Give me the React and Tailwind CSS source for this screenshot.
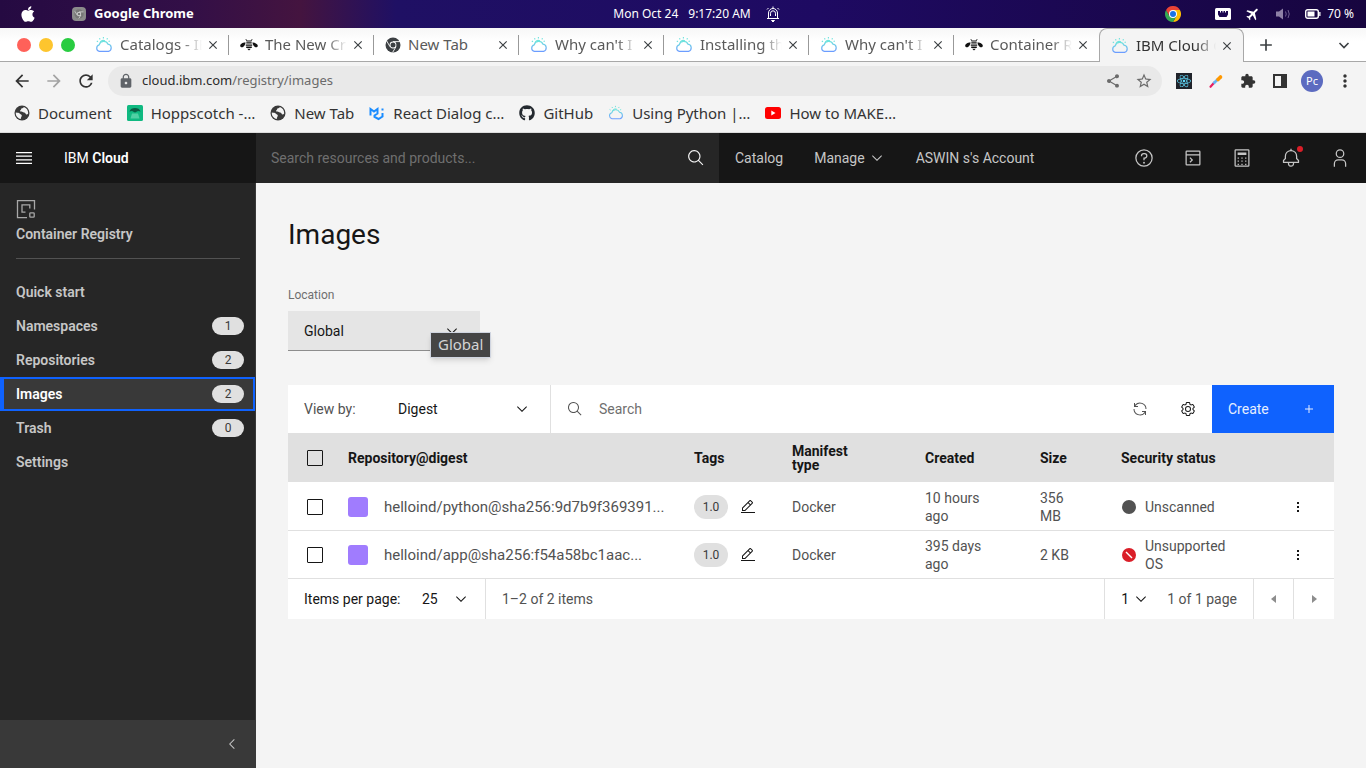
import React from "react";
import {
  FaApple,
  FaGithub,
  FaReact,
} from "react-icons/fa";
import {
  MdArrowBack,
  MdArrowForward,
  MdRefresh,
  MdLock,
  MdShare,
  MdStarBorder,
  MdExtension,
  MdMoreVert,
  MdClose,
  MdAdd,
  MdFlight,
} from "react-icons/md";

const P = {
  chevronDown: "M16 22L6 12 7.4 10.6 16 19.2 24.6 10.6 26 12z",
  chevronLeft: "M10 16L20 6 21.4 7.4 12.8 16 21.4 24.6 20 26z",
  caretLeft: "M20 24L10 16 20 8z",
  caretRight: "M12 8L22 16 12 24z",
  search:
    "M29,27.5859l-7.5521-7.5521a11.0177,11.0177,0,1,0-1.4141,1.4141L27.5859,29ZM4,13a9,9,0,1,1,9,9A9.01,9.01,0,0,1,4,13Z",
  edit: "M2 26H30V28H2zM25.4 9c.8-.8.8-2 0-2.8l-3.6-3.6c-.8-.8-2-.8-2.8 0l-15 15V24h6.4L25.4 9zM20.4 4L24 7.6l-3 3L17.4 7 20.4 4zM6 22v-3.6l10-10 3.6 3.6-10 10H6z",
  renew:
    "M12 10H6.78A11 11 0 0127 16h2A13 13 0 006 7.68V4H4v8h8zM20 22h5.22A11 11 0 015 16H3a13 13 0 0023 8.32V28h2V20H20z",
  settings:
    "M27 16.76c0-.25 0-.5 0-.76s0-.51 0-.77l1.92-1.68A2 2 0 0029.3 11L26.94 7a2 2 0 00-1.73-1 2 2 0 00-.64.1l-2.43.82a11.35 11.35 0 00-1.31-.75l-.51-2.52a2 2 0 00-2-1.61H13.64a2 2 0 00-2 1.61l-.51 2.52a11.48 11.48 0 00-1.32.75L7.43 6.06A2 2 0 006.79 6 2 2 0 005.06 7L2.7 11a2 2 0 00.41 2.51L5 15.24c0 .25 0 .5 0 .76s0 .51 0 .77L3.11 18.45A2 2 0 002.7 21L5.06 25a2 2 0 001.73 1 2 2 0 00.64-.1l2.43-.82a11.35 11.35 0 001.31.75l.51 2.52a2 2 0 002 1.61h4.72a2 2 0 002-1.61l.51-2.52a11.48 11.48 0 001.32-.75l2.42.82a2 2 0 00.64.1 2 2 0 001.73-1L29.3 21a2 2 0 00-.41-2.51ZM25.21 24l-3.43-1.16a8.86 8.86 0 01-2.71 1.57L18.36 28H13.64l-.71-3.55a9.36 9.36 0 01-2.7-1.57L6.79 24 4.43 20l2.72-2.4a8.9 8.9 0 010-3.13L4.43 12 6.79 8l3.43 1.16a8.86 8.86 0 012.71-1.57L13.64 4h4.72l.71 3.55a9.36 9.36 0 012.7 1.57L25.21 8 27.57 12l-2.72 2.4a8.9 8.9 0 010 3.13L27.57 20ZM16 22a6 6 0 116-6A5.94 5.94 0 0116 22Zm0-10a3.91 3.91 0 00-4 4 3.91 3.91 0 004 4 3.91 3.91 0 004-4A3.91 3.91 0 0016 12Z",
  add: "M17 15L17 8 15 8 15 15 8 15 8 17 15 17 15 24 17 24 17 17 24 17 24 15z",
  overflow: "M14 6h4v4h-4zM14 14h4v4h-4zM14 22h4v4h-4z",
  bell: "M28.7071,19.293,26,16.5859V13a10.0136,10.0136,0,0,0-9-9.9492V1H15V3.0508A10.0136,10.0136,0,0,0,6,13v3.5859L3.2929,19.293A1,1,0,0,0,3,20v3a1,1,0,0,0,1,1h7v.7768a5.152,5.152,0,0,0,4.5,5.1987A5.0057,5.0057,0,0,0,21,25V24h7a1,1,0,0,0,1-1V20A1,1,0,0,0,28.7071,19.293ZM19,25a3,3,0,0,1-6,0V24h6Zm8-3H5V20.4141L7.707,17.707A1,1,0,0,0,8,17V13a8,8,0,0,1,16,0v4a1,1,0,0,0,.293.707L27,20.4141Z",
  user: "M16 4a5 5 0 11-5 5 5 5 0 015-5m0-2a7 7 0 107 7A7 7 0 0016 2zM26 30H24V25a5 5 0 00-5-5H13a5 5 0 00-5 5v5H6V25a7 7 0 017-7h6a7 7 0 017 7z",
  help: "M16 2A14 14 0 1030 16 14 14 0 0016 2zm0 26A12 12 0 1128 16 12 12 0 0116 28zM16 22a1.5 1.5 0 100 3 1.5 1.5 0 000-3zM17 8H15.5A4.49 4.49 0 0011 12.5V13h2v-.5A2.5 2.5 0 0115.5 10H17a2.5 2.5 0 010 5H15v4.5h2V17a4.5 4.5 0 000-9z",
  terminal:
    "M26 4H6a2 2 0 00-2 2v20a2 2 0 002 2h20a2 2 0 002-2V6a2 2 0 00-2-2zm0 2v4H6V6zM6 26V12h20v14zM11.8 23.400l-1.400-1.400 3-3-3-3 1.400-1.400 4.400 4.400z",
  calculator:
    "M26 4v24H6V4h20m0-2H6a2 2 0 00-2 2v24a2 2 0 002 2h20a2 2 0 002-2V4a2 2 0 00-2-2zM9 7v4h14V7zM9 15h2v2H9zM15 15h2v2h-2zM21 15h2v2h-2zM9 20h2v2H9zM15 20h2v2h-2zM21 20h2v2h-2zM9 25h2v2H9zM15 25h2v2h-2zM21 25h2v2h-2z",
};

function Icon({ d, className }) {
  return (
    <svg viewBox="0 0 32 32" fill="currentColor" aria-hidden="true" className={className}>
      <path d={d} />
    </svg>
  );
}

function CloudIcon({ className = "h-[18px] w-[18px] shrink-0" }) {
  return (
    <svg viewBox="0 0 18 18" fill="none" aria-hidden="true" className={className}>
      <defs>
        <linearGradient id="sky" x1="0" y1="0" x2="0" y2="1">
          <stop offset="0" stopColor="#6fe3dd" />
          <stop offset="1" stopColor="#6c9dff" />
        </linearGradient>
      </defs>
      <path
        d="M4.400 15.400a3.400 3.400 0 01-.2-6.600A4.700 4.700 0 0113 8.200a3.700 3.700 0 01.6 7.200z"
        stroke="url(#sky)"
        strokeWidth="1.2"
      />
      <path
        d="M5 6.600A3.600 3.600 0 0110 4.800M8.400 1v1.400M4.400 2.200l.8 1.200M12.600 2.200l-.8 1.200M1.800 5l1.200.8M14.800 5l-1.200.6"
        stroke="#6fe3dd"
        strokeWidth="1.1"
      />
    </svg>
  );
}

function BeeIcon() {
  return (
    <svg viewBox="0 0 18 18" fill="#111" aria-hidden="true" className="h-[18px] w-[18px] shrink-0">
      <path d="M6.400 4.600l-1-1.200.6-.4 1.300 1.400h3.400L12 3l.6.400-1 1.200v.8H6.400z" />
      <path d="M6.300 6.200h5.400v1.400H6.300zM5.800 8.400h6.400v1.400H5.800zM6.200 10.600h5.600V12H6.200zM7.200 12.800h3.600L9 14.400z" />
      <path d="M5.600 6.600C3 6.400 .2 8 .2 9.800c0 1.400 1.800 1.800 2.800 1.300 1.400-.6 2.200-2.400 2.600-4.500zM12.400 6.600c2.600-.2 5.400 1.400 5.400 3.200 0 1.400-1.800 1.800-2.800 1.300-1.400-.6-2.200-2.400-2.600-4.500z" />
    </svg>
  );
}

function ChromeMono({ className = "h-4 w-4 shrink-0", color = "#3c4043" }) {
  return (
    <svg viewBox="0 0 16 16" aria-hidden="true" className={className}>
      <circle cx="8" cy="8" r="7.500" fill={color} />
      <path d="M8 4.600h7M5 9.700L1.600 3.800M11 9.700L7.600 15.400" stroke="#fff" strokeWidth=".9" />
      <circle cx="8" cy="8" r="3.400" fill="#fff" />
      <circle cx="8" cy="8" r="2.500" fill={color} />
    </svg>
  );
}

function GlobeIcon() {
  return (
    <svg viewBox="0 0 16 16" aria-hidden="true" className="h-4 w-4">
      <circle cx="8" cy="8" r="7.500" fill="#3a3a3a" />
      <path d="M1.800 7.500c2 .2 3.500.3 4.200 1.300.6 1 1.800.6 1.800 1.800 0 1.200-1 1.500-1 3.300C3.800 13.500 1.500 11 1.800 7.500z" fill="#f4f4f4" />
      <path d="M9.800 1.900C9.500 3 8.500 3 7.800 3.300c-1 .6-.4 1.300-1.400 1.900-.8.500-.2 1.500.8 1.400 1.400-.2 1.600.9 2.800 1 1.500.1 1.400 1.600 2.300 1.800.8.200 1.400-.4 1.900-1C14.300 5.200 12.500 2.700 9.800 1.900z" fill="#f4f4f4" />
    </svg>
  );
}

function ChromeColor() {
  return (
    <svg viewBox="0 0 48 48" aria-hidden="true" className="h-4 w-4">
      <path d="M24 12h20.800A24 24 0 0124 48L34.400 30z" fill="#fbbc04" />
      <path d="M3.200 12L13.600 30 34.400 30 24 48A24 24 0 013.200 12z" fill="#34a853" />
      <path d="M3.200 12A24 24 0 0144.800 12H24L13.600 30z" fill="#ea4335" />
      <circle cx="24" cy="24" r="12" fill="#fff" />
      <circle cx="24" cy="24" r="9" fill="#1a73e8" />
    </svg>
  );
}

const favicons = { cloud: CloudIcon, bee: BeeIcon, chrome: ChromeMono };

const tabs = [
  { icon: "cloud", title: "Catalogs - IB" },
  { icon: "bee", title: "The New Cr" },
  { icon: "chrome", title: "New Tab", short: true },
  { icon: "cloud", title: "Why can't I l" },
  { icon: "cloud", title: "Installing th" },
  { icon: "cloud", title: "Why can't I p" },
  { icon: "bee", title: "Container R" },
  { icon: "cloud", title: "IBM Cloud C", active: true },
];

function MenuBar() {
  return (
    <div className="grid h-7 grid-cols-[1fr_auto_1fr] items-center bg-linear-[90deg,#250a42_0%,#330f47_14%,#44143f_22%,#1f1064_29%,#1e0a62_60%,#17053f_100%] text-[13px] text-white">
      <div className="flex items-center pl-5">
        <FaApple className="h-[18px] w-4" />
        <span className="ml-9 flex h-[14px] w-[14px] items-center justify-center rounded-sm bg-[#8b8b8b]">
          <ChromeMono className="h-[10px] w-[10px]" color="#777" />
        </span>
        <span className="ml-2 font-bold">Google Chrome</span>
      </div>
      <div className="flex items-center pl-7">
        <span className="text-xs">Mon Oct 24</span>
        <span className="ml-2.5 text-xs">9:17:20 AM</span>
        <svg viewBox="0 0 16 18" fill="none" stroke="#fff" className="ml-3.5 h-[18px] w-4" aria-hidden="true">
          <path d="M2 13.500h12M3.500 13V8a4.500 4.500 0 019 0v5M5.500 11V8.300a2.500 2.500 0 015 0V11M2 4.500L3.500 3M14 4.500L12.500 3M8 1.500v2" />
          <path d="M6.500 15.500h3L8 17z" fill="#fff" />
        </svg>
      </div>
      <div className="flex items-center justify-end pr-3">
        <ChromeColor />
        <svg viewBox="0 0 16 14" className="ml-[34px] h-[14px] w-4" aria-hidden="true">
          <rect x="0" y="1" width="16" height="12" rx="1.500" fill="#fff" />
          <path d="M3 4h2v1.500h1V4h1.500v1.500h1V4H10v1.500h1V4h2v3.500L11.500 10h-7L3 7.500z" fill="#1b0650" />
        </svg>
        <MdFlight className="ml-3.5 h-4 w-4 rotate-45" />
        <svg viewBox="0 0 16 14" className="ml-3.5 h-[14px] w-4" aria-hidden="true">
          <path d="M1 4.500h3L8 1.500v11L4 9.500H1z" fill="#8d80a6" />
          <path d="M10.500 4.500q1.500 2.500 0 5M13 3q2.500 4 0 8" fill="none" stroke="#6d5d90" />
        </svg>
        <svg viewBox="0 0 16 12" className="ml-3.5 h-3 w-4" aria-hidden="true">
          <rect x=".7" y="1.700" width="12.600" height="8.600" rx="2" fill="none" stroke="#fff" strokeWidth="1.400" />
          <rect x="2.500" y="3.500" width="7" height="5" fill="#fff" />
          <rect x="14.200" y="4" width="1.300" height="4" fill="#fff" />
        </svg>
        <span className="ml-1.5 text-xs">70 %</span>
      </div>
    </div>
  );
}

function TabStrip() {
  return (
    <div className="flex h-[34px] bg-linear-[180deg,#f7f7f7_0%,#fff_40%] text-[15px] text-[#5a5a5a]">
      <div className="flex w-[84px] shrink-0 items-center gap-2 border-b border-[#a8a8a8] pl-[17px]">
        <span className="h-3.5 w-3.5 rounded-full bg-[#ff6159]" />
        <span className="h-3.5 w-3.5 rounded-full bg-[#fdc52e]" />
        <span className="h-3.5 w-3.5 rounded-full bg-[#29cc41]" />
      </div>
      {tabs.map((tab, i) => {
        const Fav = favicons[tab.icon];
        const shape = tab.active
          ? "rounded-t-lg border-x border-t border-[#a8a8a8] bg-[#f4f4f4] text-[#333]"
          : "border-b border-[#a8a8a8]";
        return (
          <div key={i} className={"flex w-[145px] min-w-0 items-center " + shape}>
            <div className="flex min-w-0 flex-1 items-center gap-[7px] pl-[11px]">
              <Fav />
              <span
                className={
                  "min-w-0 flex-1 overflow-hidden whitespace-nowrap " +
                  (tab.short ? "" : "[mask-image:linear-gradient(90deg,#000_75%,transparent)]")
                }
              >
                {tab.title}
              </span>
            </div>
            <button type="button" aria-label="Close tab" className="mr-2 ml-1 text-[#3c4043]">
              <MdClose className="h-3.5 w-3.5" />
            </button>
            <span className={"h-5 w-px " + (tab.active || i === 6 ? "" : "bg-[#999]")} />
          </div>
        );
      })}
      <div className="flex flex-1 items-center justify-between border-b border-[#a8a8a8] pr-3.5 pl-3 text-[#3c4043]">
        <button type="button" aria-label="New tab">
          <MdAdd className="h-5 w-5" />
        </button>
        <button type="button" aria-label="Search tabs">
          <svg viewBox="0 0 16 16" fill="none" stroke="currentColor" strokeWidth="1.600" className="h-4 w-4">
            <path d="M3.500 6L8 10.500 12.500 6" />
          </svg>
        </button>
      </div>
    </div>
  );
}

function AddressBar() {
  return (
    <div className="flex h-[38px] items-center bg-[#f4f4f4] text-[#333]">
      <div className="flex items-center gap-3 pr-3 pl-3">
        <button type="button" aria-label="Back"><MdArrowBack className="h-5 w-5" /></button>
        <button type="button" aria-label="Forward" className="text-[#a3a3a3]"><MdArrowForward className="h-5 w-5" /></button>
        <button type="button" aria-label="Reload"><MdRefresh className="h-5 w-5" /></button>
      </div>
      <div className="flex h-[30px] flex-1 items-center rounded-full bg-[#e9e9e9] pr-[9px] pl-2.5">
        <MdLock className="h-4 w-4 text-[#5f6368]" />
        <p className="ml-2 flex-1 text-[13px] text-[#6b6b6b]">
          <span className="text-[#2b2b2b]">cloud.ibm.com</span>/registry/images
        </p>
        <MdShare className="h-4 w-4 text-[#6b6b6b]" />
        <MdStarBorder className="ml-3.5 h-[18px] w-[18px] text-[#6b6b6b]" />
      </div>
      <div className="flex items-center gap-4 pl-3.5">
        <span className="flex h-4 w-4 items-center justify-center bg-[#20232a] text-[#61dafb]">
          <FaReact className="h-3.5 w-3.5" />
        </span>
        <svg viewBox="0 0 16 16" className="h-4 w-4" aria-hidden="true">
          <path d="M2.500 13.800l4-4.500" stroke="#e91e63" strokeWidth="2.200" strokeLinecap="round" />
          <path d="M5.500 10.500l4-4" stroke="#64b5f6" strokeWidth="2.600" />
          <path d="M10 6.500L12.500 4" stroke="#ff9800" strokeWidth="3.600" strokeLinecap="round" />
        </svg>
        <MdExtension className="h-4 w-4" />
        <svg viewBox="0 0 16 16" className="h-4 w-4" aria-hidden="true">
          <path d="M1 1h14v14H1zM3 3v10h6V3z" fill="#333" fillRule="evenodd" />
        </svg>
      </div>
      <div className="flex items-center gap-3 pr-[11px] pl-[13px]">
        <span className="flex h-[22px] w-[22px] items-center justify-center rounded-full bg-[#5c6bc0] text-[11px] text-white">
          Pc
        </span>
        <button type="button" aria-label="Browser menu"><MdMoreVert className="h-5 w-5" /></button>
      </div>
    </div>
  );
}

function Bookmarks() {
  const items = [
    { label: "Document", icon: <GlobeIcon /> },
    {
      label: "Hoppscotch -…",
      icon: (
        <svg viewBox="0 0 16 16" className="h-4 w-4" aria-hidden="true">
          <rect width="16" height="16" rx="1.500" fill="#10b981" />
          <path d="M2.500 6.500C3 4 5.500 3 8 3s5 1 5.500 3.500L11 6 8 7.500 5 6z" fill="#0b5d44" />
          <path d="M5 8.500h6l1.500 5h-9z" fill="#7be0bd" opacity=".6" />
        </svg>
      ),
    },
    { label: "New Tab", icon: <GlobeIcon /> },
    {
      label: "React Dialog c…",
      icon: (
        <svg viewBox="0 0 16 16" fill="none" stroke="#1a8cff" strokeWidth="2" className="h-4 w-4" aria-hidden="true">
          <path d="M1.500 10.500V4L5 6.500 8.500 4v4.500L5.500 10.500v1.500l4 2 4-2.500V8M13.500 3.500v2" />
        </svg>
      ),
    },
    { label: "GitHub", icon: <FaGithub className="h-4 w-4 text-[#24292f]" /> },
    { label: "Using Python |…", icon: <CloudIcon className="h-4 w-4" /> },
    {
      label: "How to MAKE…",
      icon: (
        <svg viewBox="0 0 16 12" className="h-3 w-4" aria-hidden="true">
          <rect width="16" height="12" rx="2.500" fill="#f00" />
          <path d="M6.300 3.500v5L10.500 6z" fill="#fff" />
        </svg>
      ),
    },
  ];
  return (
    <nav className="flex h-[33px] items-center gap-[15px] border-b border-[#dcdcdc] bg-[#f4f4f4] pb-1.5 pl-3.5 text-[15px] text-[#333]">
      {items.map((b) => (
        <a key={b.label} href="#" className="flex items-center gap-2 whitespace-nowrap">
          {b.icon}
          {b.label}
        </a>
      ))}
    </nav>
  );
}

function CloudHeader() {
  return (
    <header className="flex h-[50px] items-center bg-[#161616] text-sm text-[#c6c6c6]">
      <div className="flex w-64 shrink-0 items-center pl-4">
        <button type="button" aria-label="Menu">
          <svg viewBox="0 0 16 12" className="h-3 w-4" fill="#fff" aria-hidden="true">
            <path d="M0 0h16v1.200H0zM0 3.600h16v1.200H0zM0 7.200h16v1.200H0zM0 10.800h16v1.200H0z" />
          </svg>
        </button>
        <a href="#" className="ml-8 text-white">
          IBM <b className="font-semibold">Cloud</b>
        </a>
      </div>
      <div className="flex h-full w-[463px] items-center bg-[#262626] pr-3.5 pl-[15px]">
        <input
          type="text"
          aria-label="Search resources and products"
          placeholder="Search resources and products..."
          className="flex-1 bg-transparent outline-none placeholder:text-[#6f6f6f]"
        />
        <button type="button" aria-label="Search"><Icon d={P.search} className="h-[18px] w-[18px] text-[#f4f4f4]" /></button>
      </div>
      <nav className="flex items-center gap-[31px] pl-4">
        <a href="#">Catalog</a>
        <button type="button" className="flex items-center gap-1">
          Manage
          <Icon d={P.chevronDown} className="h-4 w-4" />
        </button>
        <a href="#">ASWIN s's Account</a>
      </nav>
      <div className="ml-auto flex items-center gap-[29px] pr-4">
        <button type="button" aria-label="Help"><Icon d={P.help} className="h-5 w-5" /></button>
        <button type="button" aria-label="Shell"><Icon d={P.terminal} className="h-5 w-5" /></button>
        <button type="button" aria-label="Cost estimator"><Icon d={P.calculator} className="h-5 w-5" /></button>
        <button type="button" aria-label="Notifications" className="relative">
          <Icon d={P.bell} className="h-5 w-5" />
          <span className="absolute -top-0.5 -right-0.5 h-1.5 w-1.5 rounded-full bg-[#da1e28]" />
        </button>
        <button type="button" aria-label="Profile"><Icon d={P.user} className="h-5 w-5" /></button>
      </div>
    </header>
  );
}

const navItems = [
  { label: "Quick start" },
  { label: "Namespaces", count: 1 },
  { label: "Repositories", count: 2 },
  { label: "Images", count: 2, active: true },
  { label: "Trash", count: 0 },
  { label: "Settings" },
];

function Sidebar() {
  return (
    <aside className="flex w-64 shrink-0 flex-col border-r border-[#393939] bg-[#262626] text-sm font-semibold text-[#c6c6c6]">
      <div className="mr-[15px] ml-4 border-b border-[#525252] pt-4 pb-[14px]">
        <svg viewBox="0 0 20 20" fill="none" stroke="#a8a8a8" strokeWidth="1.300" className="h-5 w-5" aria-hidden="true">
          <path d="M18.500 10.500V1.600h-17v17H11M13.800 9.500V5.800H6v7.400h3.500" />
          <rect x="13.800" y="13.800" width="4.400" height="4.400" rx=".8" />
        </svg>
        <p className="mt-[5px] leading-5">Container Registry</p>
      </div>
      <ul className="mt-4">
        {navItems.map((item) => (
          <li key={item.label}>
            <a
              href="#"
              className={
                "flex h-[34px] items-center justify-between " +
                (item.active
                  ? "border-2 border-l-4 border-[#0f62fe] bg-[#393939] pr-[9px] pl-3 text-white"
                  : "pr-[11px] pl-4")
              }
            >
              {item.label}
              {item.count !== undefined && (
                <span className="h-[18px] w-8 rounded-full bg-[#e0e0e0] text-center text-xs leading-[18px] font-normal text-[#393939]">
                  {item.count}
                </span>
              )}
            </a>
          </li>
        ))}
      </ul>
      <button type="button" aria-label="Collapse" className="mt-auto flex h-12 items-center justify-end bg-[#393939] pr-[15px]">
        <Icon d={P.chevronLeft} className="h-4 w-4" />
      </button>
    </aside>
  );
}

function Select({ label, value, boxClass, selectClass, chevronClass }) {
  return (
    <span className={"relative flex items-center " + boxClass}>
      <select aria-label={label} className={"h-full w-full appearance-none bg-transparent outline-none " + selectClass}>
        <option>{value}</option>
      </select>
      <Icon d={P.chevronDown} className={"pointer-events-none absolute h-4 w-4 " + chevronClass} />
    </span>
  );
}

function Check({ label }) {
  return (
    <input
      type="checkbox"
      aria-label={label}
      className="ml-[19px] block h-4 w-4 appearance-none rounded-[1px] border border-[#161616]"
    />
  );
}

const rows = [
  { name: "helloind/python@sha256:9d7b9f369391...", created: "10 hours ago", size: "356 MB", status: "Unscanned" },
  { name: "helloind/app@sha256:f54a58bc1aac...", created: "395 days ago", size: "2 KB", status: "Unsupported OS", bad: true },
];

function ImagesTable() {
  return (
    <table className="w-full table-fixed border-collapse text-left">
      <colgroup>
        <col className="w-[60px]" />
        <col />
        <col className="w-[98px]" />
        <col className="w-[133px]" />
        <col className="w-[115px]" />
        <col className="w-[81px]" />
        <col className="w-[161px]" />
        <col className="w-[52px]" />
      </colgroup>
      <thead className="bg-[#e0e0e0] leading-[14px] font-semibold text-[#161616]">
        <tr className="h-[49px]">
          <th><Check label="Select all" /></th>
          <th>Repository@digest</th>
          <th>Tags</th>
          <th className="pr-16">Manifest type</th>
          <th>Created</th>
          <th>Size</th>
          <th>Security status</th>
          <th aria-label="Actions" />
        </tr>
      </thead>
      <tbody className="bg-white leading-[18px] text-[#525252] [&_td]:pt-0.5">
        {rows.map((r) => (
          <tr key={r.name} className="h-12 border-b border-[#e0e0e0]">
            <td><Check label={"Select " + r.name} /></td>
            <td>
              <div className="flex items-center gap-4 text-[15px]">
                <span className="h-5 w-5 rounded-[3px] bg-[#a07cfe]" />
                {r.name}
              </div>
            </td>
            <td>
              <div className="flex items-center gap-3">
                <span className="h-6 w-[34px] rounded-full bg-[#e0e0e0] text-center text-xs leading-6 text-[#393939]">1.0</span>
                <button type="button" aria-label="Edit tags" className="text-[#161616]">
                  <Icon d={P.edit} className="h-4 w-4" />
                </button>
              </div>
            </td>
            <td>Docker</td>
            <td className="pr-12">{r.created}</td>
            <td className="pr-11">
              <span className={r.bad ? "whitespace-nowrap" : ""}>{r.size}</span>
            </td>
            <td className="pr-12">
              <div className="flex items-center gap-2">
                <svg viewBox="0 0 16 16" className="h-4 w-4 shrink-0" aria-hidden="true">
                  <circle cx="8" cy="8" r="7" fill={r.bad ? "#da1e28" : "#525252"} />
                  {r.bad && <path d="M5 5l6 6" stroke="#fff" strokeWidth="1.400" />}
                </svg>
                {r.status}
              </div>
            </td>
            <td>
              <button type="button" aria-label="Row actions" className="ml-2 block text-[#161616]">
                <Icon d={P.overflow} className="h-4 w-4" />
              </button>
            </td>
          </tr>
        ))}
      </tbody>
    </table>
  );
}

function Content() {
  return (
    <main className="min-w-0 flex-1 bg-[#f4f4f4] px-8 pt-8 text-sm text-[#161616]">
      <h1 className="text-[28px] leading-10">Images</h1>
      <p className="mt-8 text-xs leading-4 text-[#6f6f6f]">Location</p>
      <div className="relative mt-2 w-48">
        <Select
          label="Location"
          value="Global"
          boxClass="h-10 border-b border-[#8d8d8d] bg-[#e5e5e5]"
          selectClass="pr-12 pl-4"
          chevronClass="right-5"
        />
        <div
          role="tooltip"
          className="absolute top-[21px] left-[142px] border border-[#d0d5e0] bg-[#454545] px-[7px] pt-px pb-[3px] font-['Noto_Sans','Open_Sans',sans-serif] text-[15px] leading-5 text-[#d4d4d4] shadow-md"
        >
          Global
        </div>
      </div>

      <section className="mt-[34px]">
        <div className="flex h-12 bg-white text-[#525252]">
          <div className="flex w-[263px] items-center border-r border-[#e0e0e0] pl-4">
            <span className="w-[94px]">View by:</span>
            <Select label="View by" value="Digest" boxClass="h-full flex-1 text-[#161616]" selectClass="pr-10" chevronClass="right-5" />
          </div>
          <div className="flex flex-1 items-center gap-4 pl-4">
            <Icon d={P.search} className="h-4 w-4" />
            <input type="search" aria-label="Search images" placeholder="Search" className="flex-1 outline-none placeholder:text-[#6f6f6f]" />
          </div>
          <button type="button" aria-label="Refresh" className="flex w-12 items-center justify-center">
            <Icon d={P.renew} className="h-4 w-4" />
          </button>
          <button type="button" aria-label="Settings" className="flex w-12 items-center justify-center text-[#161616]">
            <Icon d={P.settings} className="h-4 w-4" />
          </button>
          <button type="button" className="flex w-[122px] items-center justify-between bg-[#0f62fe] pr-[17px] pl-4 text-[#e6eeff]">
            Create
            <Icon d={P.add} className="h-4 w-4" />
          </button>
        </div>
        <ImagesTable />
        <div className="flex h-10 items-stretch bg-white">
          <div className="flex items-center border-r border-[#e0e0e0] pl-4">
            <span className="w-[118px]">Items per page:</span>
            <Select label="Items per page" value="25" boxClass="h-full w-[63px]" selectClass="" chevronClass="right-4" />
          </div>
          <span className="self-center pl-4 text-[#525252]">1–2 of 2 items</span>
          <div className="ml-auto flex items-center border-l border-[#e0e0e0] pr-4 pl-4">
            <Select label="Page" value="1" boxClass="h-full w-7" selectClass="" chevronClass="right-0" />
            <span className="pl-[18px] text-[#525252]">1 of 1 page</span>
          </div>
          <button type="button" aria-label="Previous page" className="flex w-10 items-center justify-center border-l border-[#e0e0e0] text-[#8d8d8d]">
            <Icon d={P.caretLeft} className="h-4 w-4" />
          </button>
          <button type="button" aria-label="Next page" className="flex w-[41px] items-center justify-center border-l border-[#e0e0e0] text-[#8d8d8d]">
            <Icon d={P.caretRight} className="h-4 w-4" />
          </button>
        </div>
      </section>
    </main>
  );
}

export default function App() {
  return (
    <div className="flex min-h-screen flex-col font-['Roboto','Liberation_Sans',sans-serif]">
      <div className="font-['Noto_Sans','Open_Sans',sans-serif]">
        <MenuBar />
        <TabStrip />
        <AddressBar />
        <Bookmarks />
      </div>
      <CloudHeader />
      <div className="flex flex-1">
        <Sidebar />
        <Content />
      </div>
    </div>
  );
}
